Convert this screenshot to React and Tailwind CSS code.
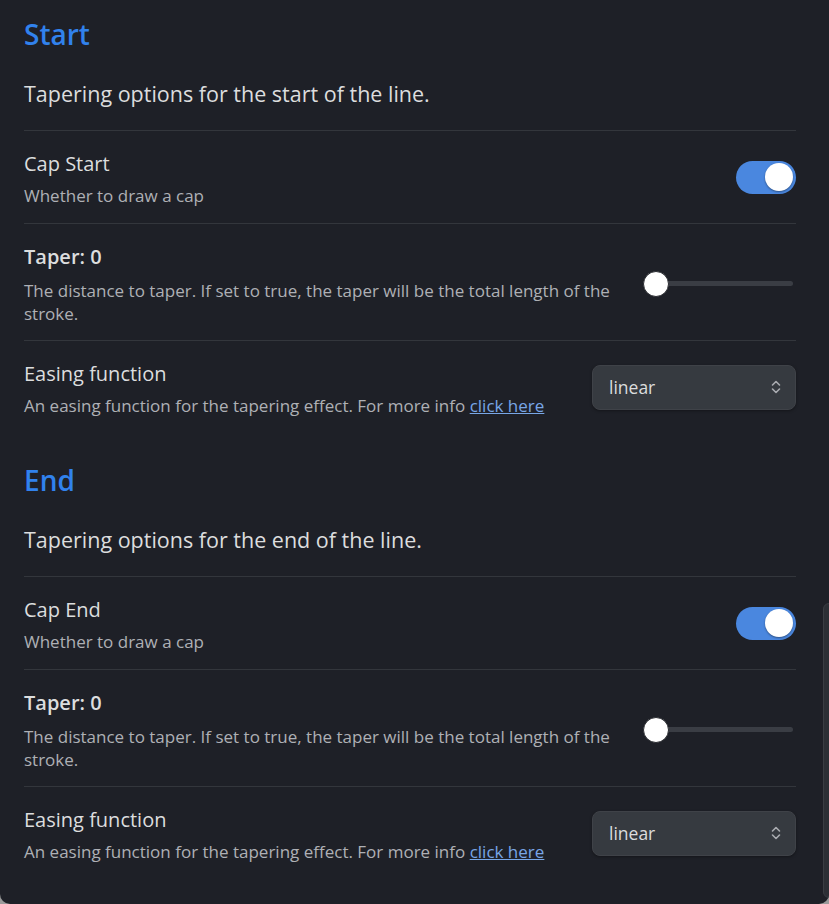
import { useState } from 'react'

const FONT = { fontFamily: '"Open Sans", "Noto Sans", sans-serif' }

function Toggle({ on, setOn }) {
  return (
    <button
      onClick={() => setOn(!on)}
      className={`relative mb-[4px] flex h-[33px] w-[60px] shrink-0 items-center rounded-full px-[3px] ${on ? 'justify-end bg-[#4a87df]' : 'justify-start bg-[#3a3d44]'}`}
    >
      <span className="h-[28px] w-[28px] rounded-full bg-white shadow-[0_1px_2px_rgba(0,0,0,0.4)]" />
    </button>
  )
}

function Slider() {
  return (
    <div className="relative mb-[2px] ml-[20px] mr-[3px] flex h-[26px] w-[150px] shrink-0 items-center">
      <div className="h-[5px] w-full rounded-full bg-[#3a3d44]" />
      <div className="absolute left-0 top-0 h-[26px] w-[26px] rounded-full border border-[#2a2c31] bg-white" />
    </div>
  )
}

function Select() {
  return (
    <div className="mb-[4px] ml-[24px] flex h-[45px] w-[204px] shrink-0 items-center justify-between rounded-[8px] border border-[#3f4248] bg-[#363a40] pl-[16px] pr-[13px] shadow-[0_1px_3px_rgba(0,0,0,0.35)]">
      <span className="text-[17.5px] text-[#dcddde]">linear</span>
      <svg width="12" height="16" viewBox="0 0 12 16" fill="none" stroke="#a9abb0" strokeWidth="1.6" strokeLinecap="round" strokeLinejoin="round">
        <path d="M2.5 6 L6 2.5 L9.5 6" />
        <path d="M2.5 10 L6 13.5 L9.5 10" />
      </svg>
    </div>
  )
}

function Item({ name, children, control }) {
  return (
    <div className="flex items-center border-t border-[#33363c] pb-[16px] pt-[20px]">
      <div className="min-w-0 flex-1">
        <div className="text-[20px] leading-[26px] text-[#dcddde]">{name}</div>
        <div className="mt-[7px] text-[17px] leading-[23px] text-[#aeb0b5]">{children}</div>
      </div>
      {control}
    </div>
  )
}

function Section({ title, intro, capName, first }) {
  const [cap, setCap] = useState(true)
  return (
    <section className={first ? '' : 'mt-[29px]'}>
      <h2 className="text-[28px] font-semibold leading-[36px] text-[#3182ed]">{title}</h2>
      <p className="mt-[28px] pb-[22px] text-[21.5px] leading-[28px] text-[#dcddde]">{intro}</p>
      <Item name={capName} control={<Toggle on={cap} setOn={setCap} />}>
        Whether to draw a cap
      </Item>
      <div className="flex items-center border-t border-[#33363c] pb-[15px] pt-[20px]">
        <div className="min-w-0 flex-1">
          <div className="text-[20px] font-semibold leading-[26px] text-[#dcddde]">Taper: 0</div>
          <div className="mt-[9px] max-w-[600px] text-[17px] leading-[23px] text-[#aeb0b5]">
            The distance to taper. If set to true, the taper will be the total length of the stroke.
          </div>
        </div>
        <Slider />
      </div>
      <Item name="Easing function" control={<Select />}>
        An easing function for the tapering effect. For more info{' '}
        <a className="cursor-pointer text-[#78a6e6] underline">click here</a>
      </Item>
    </section>
  )
}

export default function App() {
  return (
    <div className="h-[904px] w-[829px] bg-[#9a9a9a]" style={FONT}>
      <div className="relative h-[904px] overflow-hidden rounded-b-[10px] bg-[#1e2027] pl-[24px] pr-[33px] pt-[16px]">
        <Section first title="Start" intro="Tapering options for the start of the line." capName="Cap Start" />
        <Section title="End" intro="Tapering options for the end of the line." capName="Cap End" />
        <div className="absolute bottom-[6px] right-[-6px] top-[603px] w-[12px] rounded-[6px] border border-[#3a3d43] bg-[#2c2f35]" />
      </div>
    </div>
  )
}
